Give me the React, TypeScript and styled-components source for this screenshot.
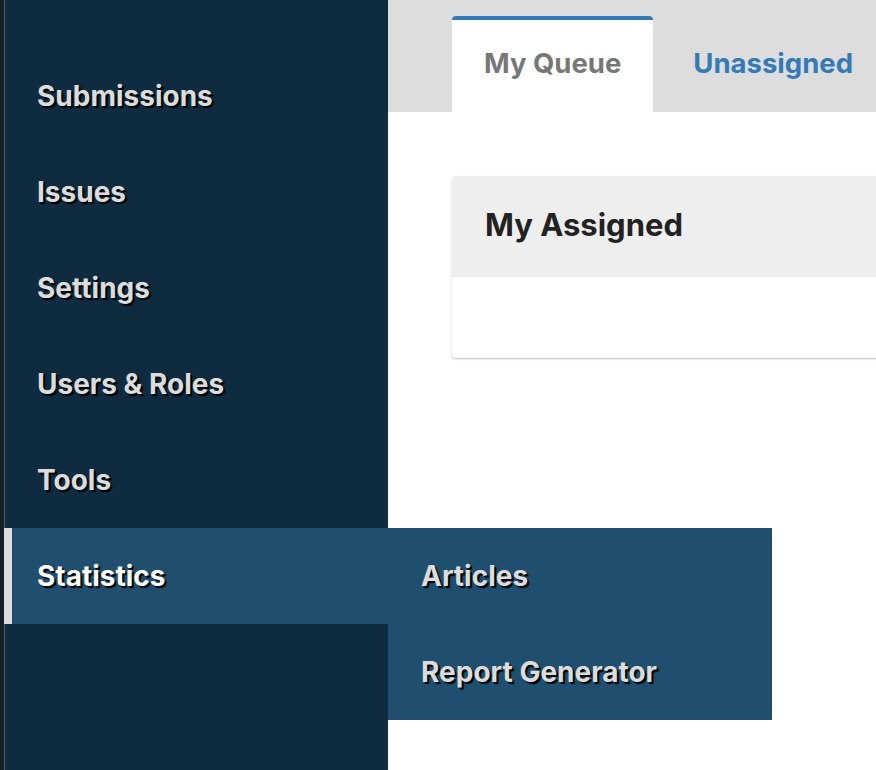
import styled, { createGlobalStyle } from 'styled-components';

const GlobalStyle = createGlobalStyle`
  html, body {
    margin: 0;
    padding: 0;
    background: #ffffff;
  }
  body {
    font-family: Inter, "Noto Sans", "Liberation Sans", sans-serif;
  }
`;

const Page = styled.div`
  display: flex;
  width: 876px;
  height: 770px;
  overflow: hidden;
`;

const Frame = styled.div`
  width: 4px;
  flex: none;
  background: #161d27;
`;

const Sidebar = styled.nav`
  width: 384px;
  flex: none;
  padding-top: 48px;
  box-sizing: border-box;
  background: #0f2b3f;
  box-shadow: inset 1px 0 0 #4b6275;
  position: relative;
  z-index: 2;
`;

const NavItem = styled.div<{ $active?: boolean }>`
  position: relative;
  display: flex;
  align-items: center;
  height: 96px;
  padding-left: 25px;
  border-left: 8px solid ${(p) => (p.$active ? '#dddddd' : 'transparent')};
  background: ${(p) => (p.$active ? '#1f4e6f' : 'transparent')};
  color: ${(p) => (p.$active ? '#ffffff' : '#dcdcdc')};
  font-size: 28px;
  font-weight: 700;
  text-shadow: 2px 2px 1px #000000;
`;

const SubMenu = styled.div`
  position: absolute;
  left: 100%;
  top: 0;
  width: 384px;
  background: #1f4e6f;
`;

const SubItem = styled.div`
  display: flex;
  align-items: center;
  height: 96px;
  padding-left: 33px;
  color: #dcdcdc;
  font-size: 28px;
  font-weight: 700;
  text-shadow: 2px 2px 1px #000000;
`;

const Main = styled.main`
  flex: 1;
  min-width: 0;
  overflow: hidden;
`;

const TabBar = styled.div`
  display: flex;
  align-items: flex-end;
  height: 112px;
  padding-left: 64px;
  background: #dddddd;
`;

const Tab = styled.div<{ $active?: boolean }>`
  display: flex;
  align-items: center;
  justify-content: center;
  flex: none;
  height: 96px;
  box-sizing: border-box;
  padding: 0 32px 6px;
  margin-right: 8px;
  border-top: 4px solid ${(p) => (p.$active ? '#337ab7' : 'transparent')};
  border-radius: 4px 4px 0 0;
  background: ${(p) => (p.$active ? '#ffffff' : 'transparent')};
  color: ${(p) => (p.$active ? '#777777' : '#337ab7')};
  font-size: 27.5px;
  font-weight: 700;
  white-space: nowrap;
`;

const Content = styled.div`
  padding: 64px 0 0 64px;
`;

const Card = styled.section`
  width: 640px;
  border-radius: 4px;
  background: #ffffff;
  box-shadow: 0 1px 2px rgba(0, 0, 0, 0.25);
  overflow: hidden;
`;

const CardHeader = styled.h2`
  margin: 0;
  display: flex;
  align-items: center;
  height: 101px;
  box-sizing: border-box;
  padding: 0 0 4px 33px;
  background: #eeeeee;
  color: #222222;
  font-size: 31px;
  font-weight: 700;
`;

const CardBody = styled.div`
  height: 81px;
`;

const navItems = ['Submissions', 'Issues', 'Settings', 'Users & Roles', 'Tools'];

export default function App() {
  return (
    <Page>
      <GlobalStyle />
      <Frame />
      <Sidebar>
        {navItems.map((label) => (
          <NavItem key={label}>{label}</NavItem>
        ))}
        <NavItem $active>
          Statistics
          <SubMenu>
            <SubItem>Articles</SubItem>
            <SubItem>Report Generator</SubItem>
          </SubMenu>
        </NavItem>
      </Sidebar>
      <Main>
        <TabBar>
          <Tab $active>My Queue</Tab>
          <Tab>Unassigned</Tab>
        </TabBar>
        <Content>
          <Card>
            <CardHeader>My Assigned</CardHeader>
            <CardBody />
          </Card>
        </Content>
      </Main>
    </Page>
  );
}
